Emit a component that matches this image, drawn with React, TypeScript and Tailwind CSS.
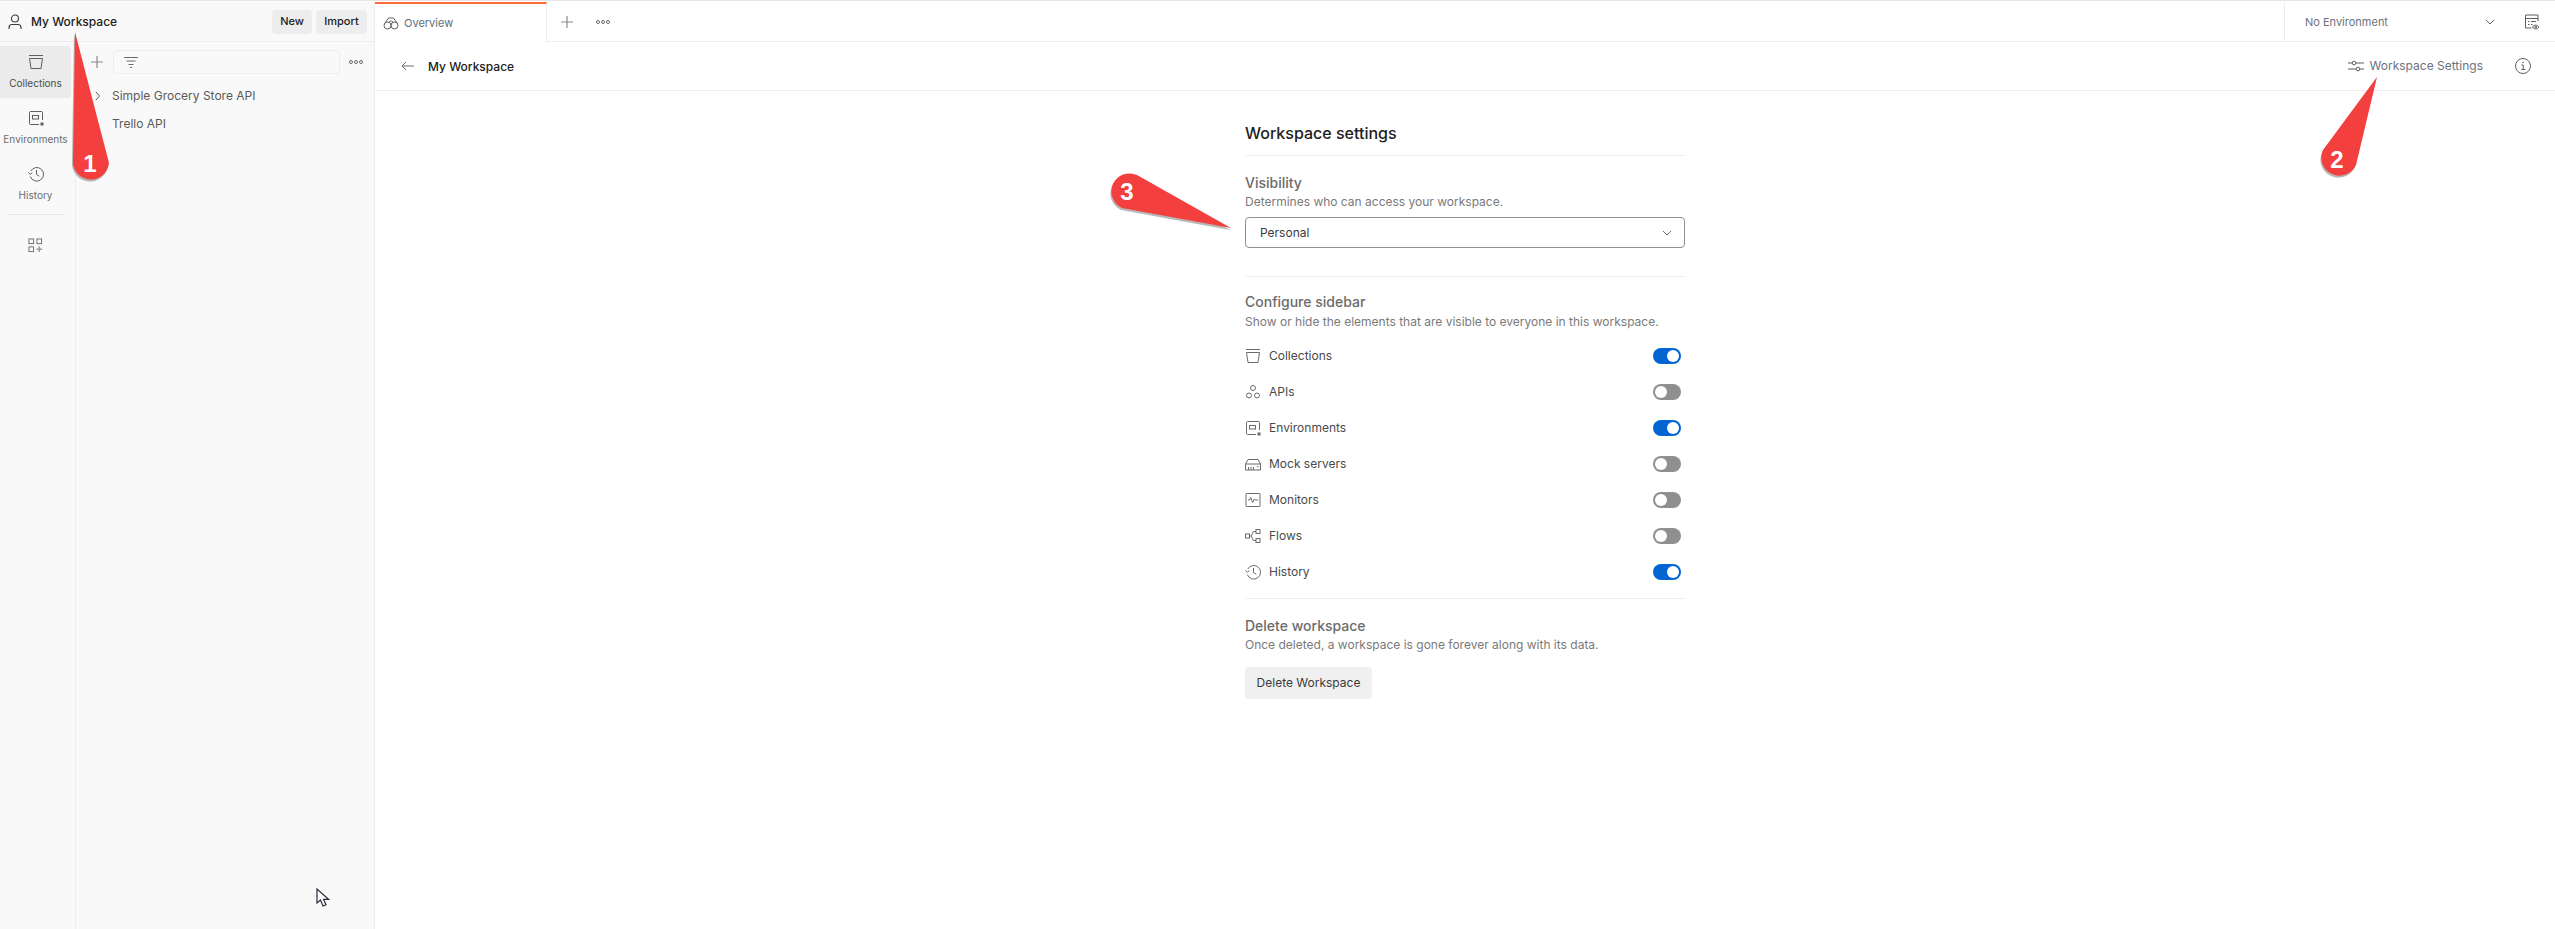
import type { ReactNode } from 'react'

function Icon({ children, className = 'h-4 w-4' }: { children: ReactNode; className?: string }) {
  return (
    <svg viewBox="0 0 16 16" fill="none" stroke="currentColor" strokeWidth="1" className={`shrink-0 ${className}`}>
      {children}
    </svg>
  )
}

const CollectionsGlyph = () => (
  <>
    <path d="M1 1.500h14" />
    <path d="M1.500 4.500h13L13 14.500H3z" />
  </>
)
const EnvironmentsGlyph = () => (
  <>
    <path d="M14.500 10V2.500a1 1 0 0 0-1-1h-11a1 1 0 0 0-1 1v11a1 1 0 0 0 1 1H11" />
    <rect x="4.500" y="5.500" width="6" height="3.500" />
    <rect x="12.500" y="12.500" width="3" height="3" fill="currentColor" stroke="none" />
  </>
)
const HistoryGlyph = () => (
  <>
    <path d="M2.800 5a6.800 6.800 0 1 1-.5 5.500" />
    <path d="M.5 6.300l1.800 2 2-1.600" />
    <path d="M8.500 4V8.500l2.800 1.700" />
  </>
)
const ApisGlyph = () => (
  <>
    <circle cx="8" cy="4" r="2.500" />
    <circle cx="4" cy="11.500" r="2.500" />
    <circle cx="12" cy="11.500" r="2.500" />
  </>
)
const MockGlyph = () => (
  <>
    <path d="M.5 8l2.500-4.500h10L15.500 8v6H.5z" />
    <path d="M.5 8h15" />
    <path d="M3.500 14v-3M6 14v-3M8.500 14v-3" />
    <path d="M12 10.500h1.500" />
  </>
)
const MonitorsGlyph = () => (
  <>
    <rect x="1" y="1.500" width="14" height="13" rx=".5" />
    <path d="M3 8h1.500l1.200-2.500 2 5 1.600-3.500 1 1H13" />
  </>
)
const FlowsGlyph = () => (
  <>
    <rect x=".5" y="6" width="4" height="4" />
    <rect x="11" y="1.500" width="4" height="4" />
    <rect x="11" y="10.500" width="4" height="4" />
    <path d="M4.500 8H6c1.500 0 1-4.500 3-4.500h2M6 8c1.500 0 1 4.500 3 4.500h2" />
  </>
)

function Toggle({ on }: { on: boolean }) {
  return (
    <div className={`flex h-4 w-7 items-center rounded-full px-0.5 ${on ? 'justify-end bg-[#0265d2]' : 'justify-start bg-[#8f8f8f]'}`}>
      <div className="h-3 w-3 rounded-full bg-white" />
    </div>
  )
}

function RailItem({ label, active, children }: { label: string; active?: boolean; children: ReactNode }) {
  return (
    <div className={`flex h-[52px] w-[71px] flex-col items-center justify-center gap-1.5 rounded-r ${active ? 'bg-[#ebebeb] text-[#4a4a4a]' : 'text-[#6b6b6b]'}`}>
      <Icon className="h-4 w-4 text-[#5f5f5f]">{children}</Icon>
      <span className="text-[10px] leading-[14px]">{label}</span>
    </div>
  )
}

const Dots = () => (
  <svg viewBox="0 0 14 4" fill="none" stroke="#6b6b6b" strokeWidth="1" className="h-1 w-3.5">
    <circle cx="2" cy="2" r="1.500" />
    <circle cx="7" cy="2" r="1.500" />
    <circle cx="12" cy="2" r="1.500" />
  </svg>
)

const Plus = () => (
  <svg viewBox="0 0 12 12" stroke="#8a8a8a" strokeWidth="1.200" className="h-3 w-3">
    <path d="M6 0v12M0 6h12" />
  </svg>
)

const rows = [
  { label: 'Collections', on: true, icon: <CollectionsGlyph /> },
  { label: 'APIs', on: false, icon: <ApisGlyph /> },
  { label: 'Environments', on: true, icon: <EnvironmentsGlyph /> },
  { label: 'Mock servers', on: false, icon: <MockGlyph /> },
  { label: 'Monitors', on: false, icon: <MonitorsGlyph /> },
  { label: 'Flows', on: false, icon: <FlowsGlyph /> },
  { label: 'History', on: true, icon: <HistoryGlyph /> },
]

function Pin({ d, x, y, n }: { d: string; x: number; y: number; n: string }) {
  return (
    <>
      <path d={d} fill="#9a9a9a" transform="translate(-1 2)" opacity="0.7" />
      <path d={d} fill="#f43f3f" />
      <text x={x} y={y} textAnchor="middle" fill="#fff" fontSize="24" fontWeight="700" fontFamily="'Liberation Sans', sans-serif">
        {n}
      </text>
    </>
  )
}

export default function App() {
  return (
    <div className="relative flex h-[929px] w-[2555px] flex-col overflow-hidden bg-white font-['Inter',sans-serif] text-xs text-[#3b3b3b]">
      <div className="h-0.5 w-full shrink-0 border-t border-[#e6e6e6]" />
      <div className="flex min-h-0 flex-1">
        {/* left sidebar */}
        <aside className="flex w-[375px] shrink-0 flex-col border-r border-[#ededed] bg-[#f9f9f9]">
          <div className="flex h-[40px] shrink-0 items-center justify-between border-b border-[#ededed] pl-2 pr-[7px]">
            <div className="flex items-center gap-[9px]">
              <svg viewBox="0 0 14 16" fill="none" stroke="#3b3b3b" strokeWidth="1.100" className="h-4 w-[14px]">
                <circle cx="7" cy="4.500" r="3.500" />
                <path d="M1 15v-1.500c0-2 1.500-3 3-3h6c1.500 0 3 1 3 3V15" />
              </svg>
              <span className="text-[12px] font-medium text-[#212121]">My Workspace</span>
            </div>
            <div className="flex gap-1">
              <button className="flex h-6 w-10 items-center justify-center rounded bg-[#ededed] text-[11px] font-medium text-[#212121]">New</button>
              <button className="flex h-6 w-[51px] items-center justify-center rounded bg-[#ededed] text-[11px] font-medium text-[#212121]">Import</button>
            </div>
          </div>
          <div className="flex min-h-0 flex-1">
            <nav className="flex w-[76px] shrink-0 flex-col items-start border-r border-[#ededed] pt-1">
              <RailItem label="Collections" active>
                <CollectionsGlyph />
              </RailItem>
              <div className="mt-1" />
              <RailItem label="Environments">
                <EnvironmentsGlyph />
              </RailItem>
              <div className="mt-1" />
              <RailItem label="History">
                <HistoryGlyph />
              </RailItem>
              <div className="mx-[7px] mt-1 h-px w-14 bg-[#e6e6e6]" />
              <div className="mt-[23px] flex w-[71px] justify-center text-[#6b6b6b]">
                <svg viewBox="0 0 16 16" fill="none" stroke="currentColor" className="h-[15px] w-[15px]">
                  <rect x="1" y="1" width="5" height="5" />
                  <rect x="9.500" y="1" width="5" height="5" />
                  <rect x="1" y="9.500" width="5" height="5" />
                  <path d="M12 9v6M9 12h6" stroke="#9a9a9a" strokeWidth="1.500" />
                </svg>
              </div>
            </nav>
            <div className="min-w-0 flex-1 text-[#5a5a5a]">
              <div className="mt-[8px] flex h-[24px] items-center pl-[15px]">
                <Plus />
                <div className="ml-[10px] flex h-[24px] w-[227px] items-center rounded-sm border border-[#ededed] pl-2.5">
                  <svg viewBox="0 0 14 12" stroke="#6b6b6b" className="h-3 w-[14px]">
                    <path d="M0 1.500h14M2.500 5h9M4.500 8.500h5M6 11.500h2" />
                  </svg>
                </div>
                <div className="ml-[9px]">
                  <Dots />
                </div>
              </div>
              <div className="mt-[8px] flex h-7 items-center text-[12px]">
                <div className="flex w-[35px] justify-center">
                  <svg viewBox="0 0 8 12" fill="none" stroke="#3b3b3b" className="ml-2 h-2.5 w-[7px]">
                    <path d="M2 1l4.500 5L2 11" />
                  </svg>
                </div>
                <span className="ml-px">Simple Grocery Store API</span>
              </div>
              <div className="flex h-7 items-center pl-[36px] text-[12px]">Trello API</div>
            </div>
          </div>
        </aside>

        {/* main area */}
        <main className="flex min-w-0 flex-1 flex-col">
          <div className="flex h-[40px] shrink-0 items-stretch border-b border-[#ededed]">
            <div className="-mb-px flex w-[172px] items-center gap-[5px] border-t-2 border-r border-t-[#ff6c37] border-r-[#ededed] bg-white pl-2 text-[11px] text-[#5f6b7a]">
              <svg viewBox="0 0 16 16" fill="none" stroke="#5f5f5f" className="h-4 w-4">
                <circle cx="4.500" cy="10.500" r="3.500" />
                <circle cx="11.500" cy="10.500" r="3.500" />
                <path d="M2 8l3.500-5h5L14 8M5.500 7.500C7 5.500 9 5.500 10.500 7.500" />
              </svg>
              <span>Overview</span>
            </div>
            <div className="ml-[14px] flex items-center">
              <Plus />
            </div>
            <div className="ml-[23px] flex items-center">
              <Dots />
            </div>
            <div className="ml-auto flex w-[271px] items-center border-l border-[#ededed] pl-[20px] text-[#6b7280]">
              <span className="translate-y-px text-[11px]">No Environment</span>
              <svg viewBox="0 0 10 6" fill="none" stroke="#5f5f5f" className="ml-[97px] h-1.5 w-2.5">
                <path d="M1 1l4 4 4-4" />
              </svg>
              <svg viewBox="0 0 16 16" fill="none" stroke="#5f5f5f" className="ml-[29px] h-4 w-4">
                <path d="M14 7V1H1.500v13h6" />
                <path d="M1.500 4.500H14M4 7.500h1.500M7 7.500h5M4 10.500h1.500M7 10.500h1.500" />
                <path d="M8.500 13c1.500-2.500 5-2.500 6.500 0-1.500 2.500-5 2.500-6.500 0z" />
                <circle cx="11.800" cy="13" r="1" />
              </svg>
            </div>
          </div>
          <div className="flex h-[49px] shrink-0 items-center justify-between border-b border-[#ededed] pb-px pl-[26px] pr-[24px]">
            <div className="flex items-center gap-[14px]">
              <svg viewBox="0 0 13 10" fill="none" stroke="#6b6b6b" className="h-2.5 w-[13px]">
                <path d="M13 5H1M5 1L1 5l4 4" />
              </svg>
              <span className="translate-y-px text-[12px] font-medium text-[#212121]">My Workspace</span>
            </div>
            <div className="flex items-center">
              <svg viewBox="0 0 16 12" fill="none" stroke="#5f5f5f" className="h-3 w-4">
                <path d="M0 3h4M8 3h8M0 9h8M12 9h4" />
                <circle cx="6" cy="3" r="1.800" />
                <circle cx="10" cy="9" r="1.800" />
              </svg>
              <span className="ml-1.5 text-[12px] text-[#6b7280]">Workspace Settings</span>
              <svg viewBox="0 0 16 16" fill="none" stroke="#5f5f5f" className="ml-[32px] h-4 w-4">
                <circle cx="8" cy="8" r="7.500" />
                <path d="M6.500 7H8.200v4.500M6.300 11.500h4" />
                <circle cx="8" cy="4.500" r=".8" fill="#5f5f5f" stroke="none" />
              </svg>
            </div>
          </div>

          <section className="mx-auto w-[440px] pt-[32px]">
            <h1 className="text-[16px] font-medium leading-5 text-[#212121]">Workspace settings</h1>
            <div className="mt-[12px] h-px bg-[#ededed]" />
            <h2 className="mt-[18px] text-[14px] font-medium leading-[18px] text-[#6b6b6b]">Visibility</h2>
            <p className="mt-[2px] text-[12px] leading-4 text-[#7a7a7a]">Determines who can access your workspace.</p>
            <div className="mt-[7px] flex h-[31px] items-center justify-between rounded border border-[#8f8f8f] pl-[14px] pr-[12px] text-[#3b3b3b]">
              <span>Personal</span>
              <svg viewBox="0 0 10 6" fill="none" stroke="#6b6b6b" className="h-1.5 w-2.5">
                <path d="M1 1l4 4 4-4" />
              </svg>
            </div>
            <div className="mt-[28px] h-px bg-[#ededed]" />
            <h2 className="mt-[16px] text-[14px] font-medium leading-[18px] text-[#6b6b6b]">Configure sidebar</h2>
            <p className="mt-[3px] text-[12px] leading-4 text-[#7a7a7a]">Show or hide the elements that are visible to everyone in this workspace.</p>
            <div className="mt-[8px]">
              {rows.map((row) => (
                <div key={row.label} className="flex h-9 items-center pr-1">
                  <Icon className="h-4 w-4 text-[#6b6b6b]">{row.icon}</Icon>
                  <span className="ml-2 text-[#4a4a4a]">{row.label}</span>
                  <div className="ml-auto">
                    <Toggle on={row.on} />
                  </div>
                </div>
              ))}
            </div>
            <div className="mt-[8px] h-px bg-[#ededed]" />
            <h2 className="mt-[18px] text-[14px] font-medium leading-[18px] text-[#6b6b6b]">Delete workspace</h2>
            <p className="mt-[2px] text-[12px] leading-4 text-[#7a7a7a]">Once deleted, a workspace is gone forever along with its data.</p>
            <button className="mt-[14px] h-8 w-[127px] rounded bg-[#f0f0f0] text-[12px] text-[#3b3b3b]">Delete Workspace</button>
          </section>
        </main>
      </div>

      {/* annotations on top of the screenshot */}
      <svg className="pointer-events-none absolute inset-0" width="2555" height="929" viewBox="0 0 2555 929">
        <Pin d="M75 32L109 163A18 18 0 0 1 73 160Z" x={90} y={172} n="1" />
        <Pin d="M2377 77L2356 165A18 18 0 1 1 2323 150Z" x={2337} y={168} n="2" />
        <Pin d="M1231 228L1122 208A18 18 0 1 1 1137 175Z" x={1127} y={200} n="3" />
      </svg>
      <svg className="pointer-events-none absolute left-[316px] top-[888px]" width="14" height="20" viewBox="0 0 14 20" fill="#fff" stroke="#2b2b3b" strokeWidth="1.200">
        <path d="M1 1v14l3.500-3 2.500 6 3-1.200-2.500-5.500H12.500z" />
      </svg>
    </div>
  )
}
